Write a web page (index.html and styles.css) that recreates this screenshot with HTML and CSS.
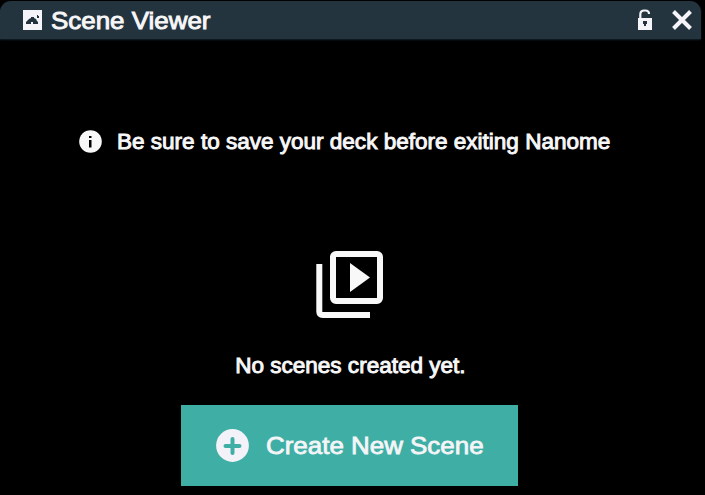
FILE: index.html
```html
<!DOCTYPE html>
<html lang="en">
<head>
<meta charset="utf-8">
<title>Scene Viewer</title>
<link rel="stylesheet" href="styles.css">
</head>
<body>
<main class="window">
  <header class="titlebar">
    <svg class="title-icon" width="19" height="20" viewBox="0 0 19 20"><path fill="#f5f4f9" d="M0 0h19v20H0z"/><path fill="#24343f" d="M3 14v-2l2-2 1-1 2-1V7h3v1l2 1 1 2 1 1v2h-5v-2H8v2zM14 5h1v1h1v2h-2z"/></svg>
    <h1 class="title">Scene Viewer</h1>
    <svg class="lock" width="16" height="22" viewBox="0 0 16 22"><path d="M3.300 10V5.500q0-4 4-4h1q3.700 0 3.700 3.500" fill="none" stroke="#f5f4f9" stroke-width="2.2"/><path fill="#f5f4f9" d="M1 9h14v12H1z"/><path fill="#24343f" d="M6 12h4v3H9v2H7v-2H6z"/></svg>
    <svg class="close" width="20" height="20" viewBox="0 0 20 20"><path d="M1.500 1.500l17 17M18.500 1.500l-17 17" stroke="#f5f4f9" stroke-width="4"/></svg>
  </header>
  <section class="content">
    <div class="notice">
      <svg width="23" height="23" viewBox="0 0 23 23"><circle cx="11.500" cy="11.500" r="11.300" fill="#f8f8f8"/><path d="M10 6h2.500v2H10zM10 10h2.500v7.500H10z"/></svg>
      <p class="text notice-text">Be sure to save your deck before exiting Nanome</p>
    </div>
    <svg class="library" width="67" height="67" viewBox="0 0 67 67"><g fill="none" stroke="#f8f8f8" stroke-width="6"><rect x="17" y="3" width="47" height="47" rx="3"/><path d="M3.300 13v47.500q0 3.500 3.500 3.500H54"/></g><path fill="#f8f8f8" d="M34 12v29l20-14.500z"/></svg>
    <p class="text empty-text">No scenes created yet.</p>
    <button class="create">
      <svg width="33" height="33" viewBox="0 0 33 33"><circle cx="16.500" cy="16.500" r="16.400" fill="#f3f2f8"/><path d="M16.500 10v14M9.500 17h14" stroke="#3fafa5" stroke-width="4" stroke-linecap="round"/></svg>
      <span class="create-label">Create New Scene</span>
    </button>
  </section>
</main>
</body>
</html>
```

FILE: styles.css
```css
* { box-sizing: border-box; }
body { margin: 0; background: #000; color: #f7f7f8; font-family: "Liberation Sans", Arial, sans-serif; overflow: hidden; }
p, h1 { margin: 0; font-weight: 400; white-space: nowrap; -webkit-text-stroke: .9px currentColor; }
.window { width: 705px; height: 495px; padding-top: 1px; }
.titlebar { display: flex; width: 701px; height: 38px; padding: 0 9px 0 23px; align-items: center; background: #24343f; border-radius: 11px 11px 0 0; box-shadow: 0 1px 2px #14232b; }
.title { margin-left: 8.6px; padding-top: 2px; font-size: 24px; line-height: 28px; transform: scaleX(1.08); transform-origin: left; }
.lock { margin-left: auto; }
.close { margin-left: 19px; }
.content { display: flex; width: 699.6px; flex-direction: column; align-items: center; padding-top: 88px; }
.notice { display: flex; width: 100%; height: 29px; align-items: center; padding-left: 78.6px; gap: 15.4px; }
.text { font-size: 21.2px; line-height: 26px; transform: scaleX(1.063); }
.notice-text { transform-origin: left; }
.library { margin-top: 95px; }
.empty-text { margin-top: 35px; padding-left: 1px; }
.create { display: flex; width: 337px; height: 81px; margin-top: 26px; padding: 0 0 0 34.4px; gap: 17.6px; align-items: center; border: 0; background: #3fafa5; color: #f5f5f8; font: 24px "Liberation Sans", Arial, sans-serif; }
.create-label { white-space: nowrap; -webkit-text-stroke: .8px currentColor; transform: scaleX(1.08); transform-origin: left; }
```
